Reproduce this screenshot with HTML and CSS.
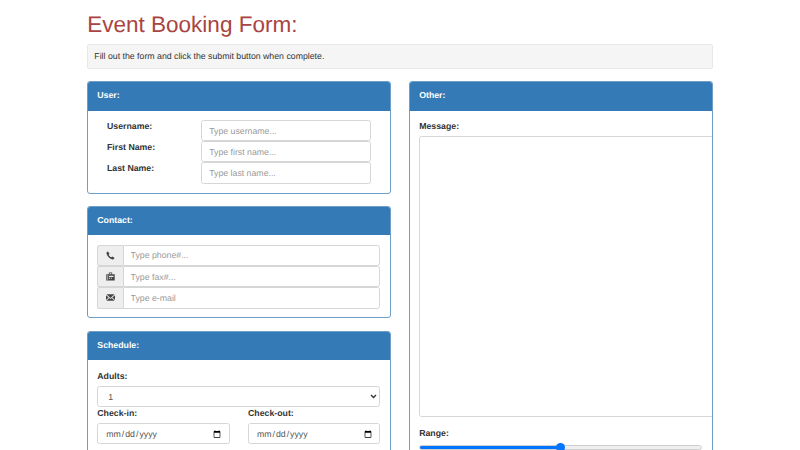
FILE: index.html
```html
<!DOCTYPE html>
<html lang="en">
<head>
<meta charset="utf-8">
<title>Event Booking Form</title>
<link rel="stylesheet" href="styles.css">
</head>
<body>
<main class="container">
  <h1 class="title">Event Booking Form:</h1>
  <div class="well">Fill out the form and click the submit button when complete.</div>
  <div class="columns">
    <div class="col">
      <section class="panel">
        <header class="panel-heading">User:</header>
        <div class="panel-body user-body">
          <div class="user-row"><label class="label user-label">Username:</label><input class="input" placeholder="Type username..."></div>
          <div class="user-row"><label class="label user-label">First Name:</label><input class="input" placeholder="Type first name..."></div>
          <div class="user-row"><label class="label user-label">Last Name:</label><input class="input" placeholder="Type last name..."></div>
        </div>
      </section>
      <section class="panel">
        <header class="panel-heading">Contact:</header>
        <div class="panel-body">
          <div class="input-group">
            <span class="addon"><svg class="icon" viewBox="0 0 12 12"><path d="M2.6 .6 L4.6 3.4 L3.6 4.9 C4.2 6.3 5.7 7.8 7.1 8.4 L8.6 7.4 L11.4 9.4 C11 10.8 9.8 11.6 8.6 11.3 C5 10.5 1.5 7 .7 3.4 C.4 2.2 1.2 1 2.6 .6 Z"/></svg></span>
            <input class="input group-input" placeholder="Type phone#...">
          </div>
          <div class="input-group">
            <span class="addon"><svg class="icon" viewBox="0 0 12 12"><path fill-rule="evenodd" d="M3.8 .6 H8.2 V3 H11.6 V11.4 H.4 V3 H3.8 Z M4.8 1.6 V3 H7.2 V1.6 Z M2 3.8 V10.6 H2.8 V3.8 Z M4 5 V6.8 H10 V5 Z M4 7.8 V9 H5.4 V7.8 Z M6.4 7.8 V9 H7.8 V7.8 Z"/></svg></span>
            <input class="input group-input" placeholder="Type fax#...">
          </div>
          <div class="input-group">
            <span class="addon"><svg class="icon" viewBox="0 0 12 12"><path d="M.6 1.8 H11.4 L6 6.6 Z M0 3 L3.6 6 L0 9.4 Z M12 3 L8.4 6 L12 9.4 Z M4.4 6.7 L6 8 L7.6 6.7 L11.4 10.4 H.6 Z"/></svg></span>
            <input class="input group-input" placeholder="Type e-mail">
          </div>
        </div>
      </section>
      <section class="panel">
        <header class="panel-heading">Schedule:</header>
        <div class="panel-body">
          <label class="label block-label">Adults:</label>
          <select class="input select"><option>1</option><option>2</option><option>3</option></select>
          <div class="dates">
            <div class="date-field"><label class="label date-label">Check-in:</label><input class="input date" type="date"></div>
            <div class="date-field"><label class="label date-label">Check-out:</label><input class="input date" type="date"></div>
          </div>
        </div>
      </section>
    </div>
    <div class="col">
      <section class="panel other">
        <header class="panel-heading">Other:</header>
        <div class="panel-body">
          <label class="label block-label">Message:</label>
          <textarea class="message"></textarea>
          <label class="label range-label">Range:</label>
          <input class="range" type="range" min="0" max="100" value="50">
        </div>
      </section>
    </div>
  </div>
</main>
</body>
</html>
```
FILE: styles.css
```css
* { box-sizing: border-box; }
html, body { margin: 0; height: 450px; overflow: hidden; background: #fff; }
body { font-family: "Liberation Sans", Arial, sans-serif; font-size: 8.75px; line-height: 12.5px; color: #333; text-rendering: geometricPrecision; }
.container { width: 625.5px; margin-left: 87.3px; }
.title { margin: 0; padding-top: 12px; height: 44px; font-size: 22.5px; font-weight: 400; line-height: 25px; color: #a94442; }
.well { height: 24.75px; padding: 0 6px; line-height: 23px; background: #f5f5f5; border: 1px solid #e8e8e8; border-radius: 2px; }
.columns { display: flex; gap: 18.4px; margin-top: 12.5px; }
.col { width: 303.5px; flex: none; }
.panel { border: 1px solid #6f9fc8; border-radius: 3px; background: #fff; margin-bottom: 12.5px; overflow: hidden; }
.panel-heading { height: 28.3px; padding: 0 9px; line-height: 26px; background: #337ab7; color: #fff; font-weight: 700; }
.panel-body { padding: 9.4px 9.4px 8.9px 9px; }
.user-body { padding-left: 18.7px; padding-right: 18.4px; }
.label { font-weight: 700; color: #333; }
.user-row { display: flex; height: 21.25px; }
.user-label { width: 94.3px; flex: none; line-height: 12.5px; }
.input { display: block; width: 100%; height: 21.25px; padding: 0 6.9px; font: 8.75px "Liberation Sans", Arial, sans-serif; color: #555; background: #fff; border: 1px solid #d6d6d6; border-radius: 2.5px; outline: none; text-rendering: geometricPrecision; }
.input::placeholder { color: #999; opacity: 1; }
.input-group { display: flex; height: 21.25px; }
.addon { width: 25.4px; flex: none; display: flex; align-items: center; justify-content: center; background: #eee; border: 1px solid #d6d6d6; border-right: 0; border-radius: 2.5px 0 0 2.5px; }
.icon { width: 9px; height: 9px; fill: #444; display: block; }
.group-input { flex: 1; min-width: 0; border-radius: 0 2.5px 2.5px 0; }
.block-label { display: block; height: 16.5px; line-height: 12.5px; }
.select { padding-left: 10px; appearance: none; background: #fff url("data:image/svg+xml,%3Csvg xmlns='http://www.w3.org/2000/svg' width='7' height='5' viewBox='0 0 7 5'%3E%3Cpath d='M1 1 L3.5 3.5 L6 1' fill='none' stroke='%23333' stroke-width='1.3'/%3E%3C/svg%3E") no-repeat right 2.5px center; }
.dates { display: flex; justify-content: space-between; }
.date-field { width: 132.4px; }
.date-label { display: block; height: 15.6px; line-height: 12.5px; }
.date::-webkit-calendar-picker-indicator { width: 8px; height: 8px; padding: 0; margin: 0 1px 0 0; }
.date::-webkit-datetime-edit { padding: 0; }
.message { display: block; width: 300px; height: 281px; margin-bottom: 9.4px; border: 1px solid #d6d6d6; border-radius: 2.5px; background: #fff; resize: none; outline: none; }
.range-label { display: block; height: 12.5px; line-height: 12.5px; }
.range { display: block; width: 283px; height: 10px; margin: 3px 0 0; padding: 0; appearance: none; background: transparent; }
.range::-webkit-slider-runnable-track { height: 5px; border: 1px solid #cfcfcf; border-radius: 3px; background: linear-gradient(to right, #0075ff 50%, #efefef 50%); }
.range::-webkit-slider-thumb { appearance: none; width: 9px; height: 9px; margin-top: -3px; border-radius: 50%; background: #0075ff; }
```
